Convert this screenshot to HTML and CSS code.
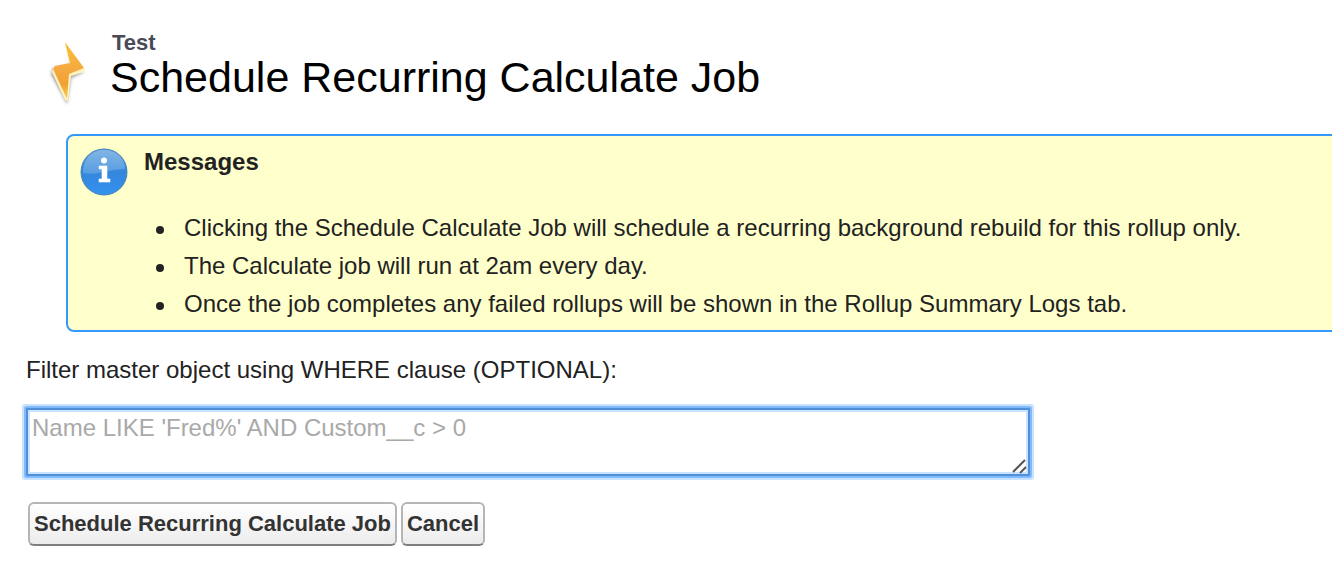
FILE: index.html
```html
<!DOCTYPE html>
<html lang="en">
<head>
<meta charset="utf-8">
<meta name="viewport" content="width=device-width, initial-scale=1">
<title>Schedule Recurring Calculate Job</title>
<link rel="stylesheet" href="styles.css">
</head>
<body>
<header class="page-header">
  <svg class="bolt" viewBox="0 0 44 68" aria-hidden="true">
    <defs>
      <linearGradient id="boltFill" x1="0" y1="0" x2="0" y2="1">
        <stop offset="0" stop-color="#f7c13c"/>
        <stop offset="0.5" stop-color="#f5a840"/>
        <stop offset="0.75" stop-color="#f0a035"/>
        <stop offset="1" stop-color="#fbd050"/>
      </linearGradient>
      <filter id="boltShadow" x="-30%" y="-20%" width="160%" height="140%">
        <feGaussianBlur stdDeviation="1.5"/>
      </filter>
    </defs>
    <path d="M18 8 22 28 38 34 25 40 21 66 5 36 7 30 22 27Z" fill="#666" opacity="0.65" filter="url(#boltShadow)"/>
    <path d="M19 5 39 31 38 34 25 38 22 63 19 62 6 34 8 29 23 26Z" fill="#fff3c0"/>
    <path d="M19 4 38 30 23 36 21 61 7 31 9 28 24 25Z" fill="url(#boltFill)"/>
  </svg>
  <div class="heading">
    <p class="object-name">Test</p>
    <h1 class="title">Schedule Recurring Calculate Job</h1>
  </div>
</header>
<main class="content">
  <section class="message">
    <svg class="info" viewBox="0 0 48 48" aria-hidden="true">
      <defs>
        <linearGradient id="infoFill" x1="0" y1="0" x2="0" y2="1">
          <stop offset="0" stop-color="#5a9cdc"/>
          <stop offset="0.5" stop-color="#3486dc"/>
          <stop offset="1" stop-color="#3492ee"/>
        </linearGradient>
        <linearGradient id="infoGloss" x1="0" y1="0" x2="0" y2="1">
          <stop offset="0" stop-color="#8cbbe6"/>
          <stop offset="1" stop-color="#5fa2e4"/>
        </linearGradient>
      </defs>
      <circle cx="24" cy="24" r="23.500" fill="#4a86b8"/>
      <circle cx="24" cy="24" r="22.500" fill="url(#infoFill)"/>
      <path d="M3 25C3 10 12 2 24 2S45 10 45 21Q35 21 24 24T3 25Z" fill="url(#infoGloss)" opacity="0.8"/>
      <circle cx="24" cy="12.500" r="3" fill="#fff"/>
      <path d="M19 18H27V31H30V34H19V31H22V21H19Z" fill="#fff" stroke="#fff" stroke-width="0.6"/>
    </svg>
    <div class="message-body">
      <h2 class="message-title">Messages</h2>
      <ul class="message-list">
        <li>Clicking the Schedule Calculate Job will schedule a recurring background rebuild for this rollup only.</li>
        <li>The Calculate job will run at 2am every day.</li>
        <li>Once the job completes any failed rollups will be shown in the Rollup Summary Logs tab.</li>
      </ul>
    </div>
  </section>
  <form class="form">
    <label class="label" for="where">Filter master object using WHERE clause (OPTIONAL):</label>
    <div class="field">
      <textarea class="where" id="where" placeholder="Name LIKE 'Fred%' AND Custom__c &gt; 0"></textarea>
      <svg class="grip" viewBox="0 0 16 16" aria-hidden="true"><path d="M1 14 13 2M8 15 14 9"/></svg>
    </div>
    <div class="actions">
      <button class="btn" type="button">Schedule Recurring Calculate Job</button>
      <button class="btn" type="button">Cancel</button>
    </div>
  </form>
</main>
</body>
</html>
```
FILE: styles.css
```css
* {
  box-sizing: border-box;
}

body {
  margin: 0;
  padding: 30px 0 20px 26px;
  overflow-x: hidden;
  background: #fff;
  color: #222;
  font-family: "Liberation Sans", Arial, sans-serif;
  font-size: 24px;
  line-height: 38px;
}

.page-header {
  display: flex;
  gap: 20px;
  padding-left: 20px;
}

.bolt {
  flex: none;
  width: 44px;
  height: 68px;
  margin-top: 8px;
}

.object-name {
  margin: 0;
  padding-left: 2px;
  color: #4a4a56;
  font-size: 22px;
  font-weight: bold;
  line-height: 25px;
}

.title {
  margin: 0;
  color: #000;
  font-size: 43px;
  font-weight: normal;
  line-height: 44px;
}

.message {
  display: flex;
  gap: 16px;
  margin: 28px -10px 0 40px;
  padding: 12px 12px 7px;
  border: 2px solid #39f;
  border-radius: 8px;
  background: #ffc;
}

.info {
  flex: none;
  width: 48px;
  height: 48px;
}

.message-body {
  flex: 1;
}

.message-title {
  margin: 0;
  font-size: 24px;
  line-height: 28px;
}

.message-list {
  margin: 33px 0 0;
  padding-left: 12px;
  list-style: none;
  white-space: nowrap;
}

.message-list li {
  display: flex;
  align-items: center;
  gap: 20px;
}

.message-list li::before {
  content: "";
  width: 8px;
  height: 8px;
  margin-top: 4px;
  border-radius: 50%;
  background: #222;
}

.form {
  display: flex;
  flex-direction: column;
  align-items: flex-start;
  padding-top: 19px;
}

.field {
  position: relative;
  width: 77%;
  margin-top: 19px;
  padding-right: 2px;
}

.where {
  display: block;
  width: 100%;
  height: 68px;
  padding: 4px;
  border: 2px solid #5090d6;
  border-radius: 1px;
  outline: none;
  box-shadow: inset 0 0 0 2px #c9e2ff, 0 0 0 2px #80bafc, 0 0 0 4px #c9e2ff;
  color: #222;
  font: inherit;
  line-height: 28px;
  resize: none;
}

.where::placeholder {
  color: #a9a9a9;
}

.grip {
  position: absolute;
  right: 4px;
  bottom: 2px;
  width: 16px;
  height: 16px;
  fill: none;
  stroke: #555;
  stroke-width: 2;
  pointer-events: none;
}

.actions {
  display: flex;
  gap: 4px;
  padding: 26px 0 0 2px;
}

.btn {
  height: 44px;
  padding: 0 4px;
  border: 2px solid #b5b5b5;
  border-bottom-color: #7f7f7f;
  border-radius: 6px;
  background: linear-gradient(#fff, #ececec);
  color: #333;
  font: bold 22px/38px "Liberation Sans", Arial, sans-serif;
}
```
